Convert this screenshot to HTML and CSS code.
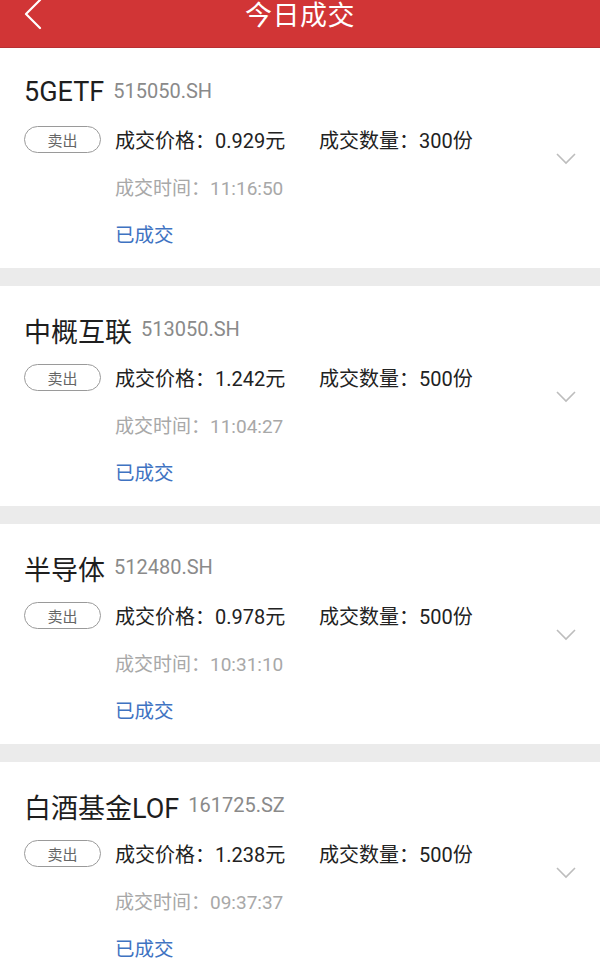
FILE: index.html
```html
<!DOCTYPE html>
<html lang="zh">
<head>
<meta charset="utf-8">
<link rel="stylesheet" href="styles.css">
</head>
<body>
<header class="topbar">
  <svg class="back" width="24" height="32" viewBox="0 0 24 32"><path d="M18 1 L4 15 L18 29" fill="none" stroke="#fff" stroke-width="2.2" stroke-linecap="round" stroke-linejoin="round"/></svg>
  <div class="title">今日成交</div>
</header>
<main class="list">
  <section class="card">
    <div class="main">
      <div class="name-row"><span class="name">5GETF</span><span class="code">515050.SH</span></div>
      <div class="grid">
        <div class="badge">卖出</div>
        <div class="info"><span class="price">成交价格：0.929元</span><span>成交数量：300份</span></div>
        <div class="time">成交时间：11:16:50</div>
        <div class="status">已成交</div>
      </div>
    </div>
    <svg class="chev" width="20" height="12" viewBox="0 0 20 12"><path d="M1 1 L10 10 L19 1" fill="none" stroke="#bdbdbd" stroke-width="1.6"/></svg>
  </section>
  <div class="sep"></div>
  <section class="card">
    <div class="main">
      <div class="name-row"><span class="name">中概互联</span><span class="code">513050.SH</span></div>
      <div class="grid">
        <div class="badge">卖出</div>
        <div class="info"><span class="price">成交价格：1.242元</span><span>成交数量：500份</span></div>
        <div class="time">成交时间：11:04:27</div>
        <div class="status">已成交</div>
      </div>
    </div>
    <svg class="chev" width="20" height="12" viewBox="0 0 20 12"><path d="M1 1 L10 10 L19 1" fill="none" stroke="#bdbdbd" stroke-width="1.6"/></svg>
  </section>
  <div class="sep"></div>
  <section class="card">
    <div class="main">
      <div class="name-row"><span class="name">半导体</span><span class="code">512480.SH</span></div>
      <div class="grid">
        <div class="badge">卖出</div>
        <div class="info"><span class="price">成交价格：0.978元</span><span>成交数量：500份</span></div>
        <div class="time">成交时间：10:31:10</div>
        <div class="status">已成交</div>
      </div>
    </div>
    <svg class="chev" width="20" height="12" viewBox="0 0 20 12"><path d="M1 1 L10 10 L19 1" fill="none" stroke="#bdbdbd" stroke-width="1.6"/></svg>
  </section>
  <div class="sep"></div>
  <section class="card">
    <div class="main">
      <div class="name-row"><span class="name">白酒基金LOF</span><span class="code">161725.SZ</span></div>
      <div class="grid">
        <div class="badge">卖出</div>
        <div class="info"><span class="price">成交价格：1.238元</span><span>成交数量：500份</span></div>
        <div class="time">成交时间：09:37:37</div>
        <div class="status">已成交</div>
      </div>
    </div>
    <svg class="chev" width="20" height="12" viewBox="0 0 20 12"><path d="M1 1 L10 10 L19 1" fill="none" stroke="#bdbdbd" stroke-width="1.6"/></svg>
  </section>
</main>
</body>
</html>
```
FILE: styles.css
```css
* { box-sizing: border-box; }
html, body { margin: 0; padding: 0; background: #fff; }
body {
  width: 600px;
  height: 980px;
  overflow: hidden;
  font-family: Roboto, "Noto Sans CJK SC", sans-serif;
  color: #222;
}
.topbar {
  position: relative;
  height: 48px;
  background: #d13536;
  border-bottom: 1px solid #b83033;
  display: flex;
  justify-content: center;
  align-items: flex-start;
  padding-top: 2px;
}
.back {
  position: absolute;
  left: 22px;
  top: -1px;
}
.title {
  color: #fff;
  font-size: 27px;
  line-height: 28px;
  letter-spacing: 0.5px;
}
.card {
  height: 220px;
  display: flex;
  align-items: center;
  padding: 0 24px 0 24px;
  background: #fff;
}
.main {
  flex: 1;
  height: 220px;
  padding-top: 20px;
}
.name-row {
  height: 48px;
  display: flex;
  align-items: center;
  gap: 9px;
}
.name {
  font-size: 27px;
  color: #1e1e1e;
}
.code {
  font-size: 20px;
  color: #8a8a8a;
  margin-top: -3px;
}
.grid {
  display: grid;
  grid-template-columns: 91px 1fr;
  grid-auto-rows: 47px;
  align-items: center;
}
.badge {
  width: 77px;
  height: 27px;
  border: 1px solid #9a9a9a;
  border-radius: 14px;
  font-size: 15px;
  color: #666;
  display: flex;
  align-items: center;
  justify-content: center;
}
.info {
  font-size: 20px;
  color: #222;
  display: flex;
}
.price {
  width: 204px;
}
.time {
  grid-column: 2;
  font-size: 19px;
  color: #a8a8a8;
}
.status {
  grid-column: 2;
  font-size: 19.5px;
  color: #3f73c2;
}
.chev {
  margin-top: 2px;
}
.sep {
  height: 18px;
  background: #ebebeb;
}
```
